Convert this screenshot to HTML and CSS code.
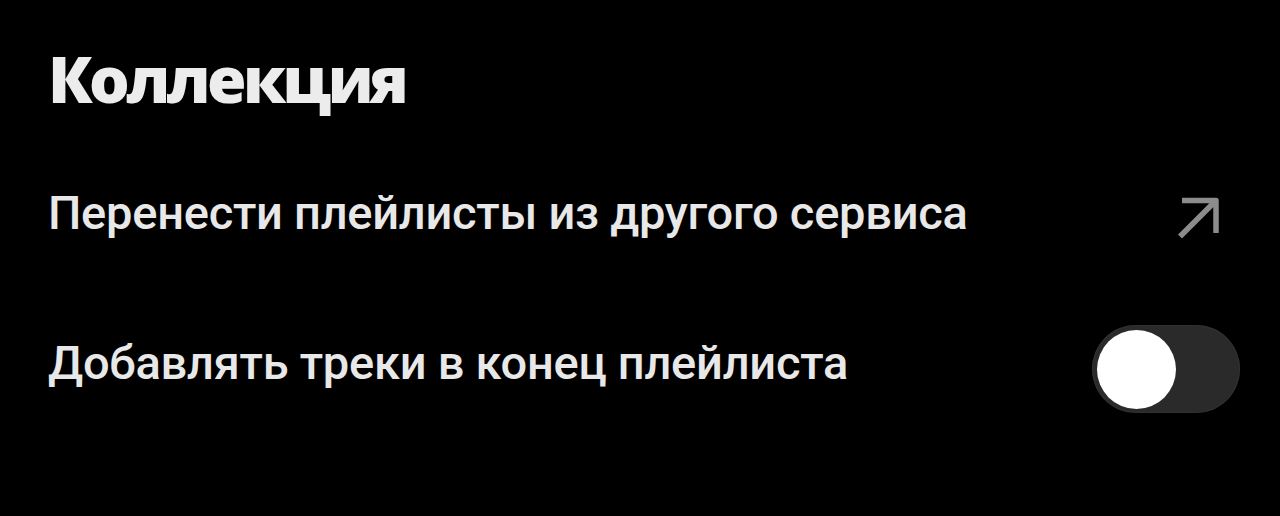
FILE: index.html
```html
<!DOCTYPE html>
<html lang="ru">
<head>
<meta charset="utf-8">
<title>Коллекция</title>
<link rel="stylesheet" href="styles.css">
</head>
<body>
<main class="settings">
  <h1 class="settings__title">Коллекция</h1>
  <div class="settings__row">
    <span class="settings__label">Перенести плейлисты из другого сервиса</span>
    <svg class="settings__arrow" width="46" height="44" viewBox="0 0 46 44" aria-hidden="true">
      <path d="M4 41.5 L40 5.5 M6 5.5 H40 V38" fill="none" stroke="#8c8c8c" stroke-width="5.5" stroke-linejoin="round" stroke-linecap="butt"/>
    </svg>
  </div>
  <div class="settings__row settings__row--switch">
    <span class="settings__label settings__label--raised">Добавлять треки в конец плейлиста</span>
    <span class="toggle"><span class="toggle__knob"></span></span>
  </div>
</main>
</body>
</html>
```
FILE: styles.css
```css
html, body {
  margin: 0;
  background: #000;
}

.settings {
  width: 1280px;
  height: 516px;
  box-sizing: border-box;
  padding: 39px 40px 0 48px;
  color: #e8e8e8;
  font-family: "Open Sans", "Noto Sans", sans-serif;
}

.settings__title {
  margin: 0 0 34px;
  font-size: 64px;
  font-weight: 800;
  line-height: 80px;
  letter-spacing: -3.6px;
  color: #ececec;
}

.settings__row {
  display: flex;
  align-items: center;
  justify-content: space-between;
  height: 120px;
}

.settings__row--switch {
  height: 88px;
  margin-top: 52px;
}

.settings__label {
  font-family: Roboto, "Open Sans", sans-serif;
  font-size: 47px;
  font-weight: 500;
  line-height: 64px;
  letter-spacing: -0.25px;
}

.settings__label--raised {
  padding-bottom: 13px;
}

.settings__arrow {
  overflow: visible;
  margin: 7px 18px 0 0;
}

.toggle {
  display: flex;
  align-items: center;
  width: 148px;
  height: 88px;
  box-sizing: border-box;
  padding: 0 5px;
  border-radius: 44px;
  background: #2a2a2b;
  box-shadow: inset 0 0 0 1px #313132;
}

.toggle__knob {
  width: 79px;
  height: 79px;
  border-radius: 50%;
  background: #fff;
}
```
